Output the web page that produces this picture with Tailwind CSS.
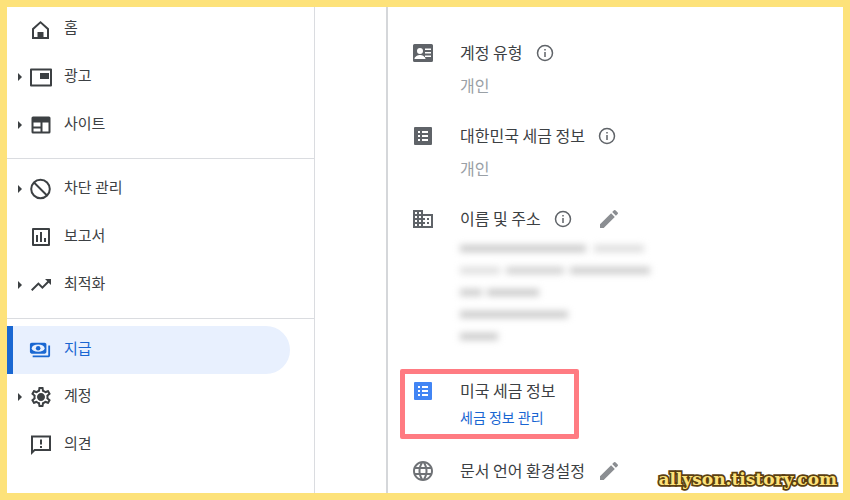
<!DOCTYPE html>
<html><head><meta charset="utf-8">
<script src="https://cdn.jsdelivr.net/npm/@tailwindcss/browser@4"></script>
</head>
<body class="m-0 bg-white">
<div class="w-[850px] h-[500px] overflow-hidden border-[7px] border-[#fde27a] bg-white flex font-['Noto_Sans_CJK_KR','Noto_Sans',sans-serif] text-[15px] text-[#3c4043] relative">
  <!-- sidebar -->
  <nav class="w-[308px] shrink-0 border-r border-[#dadce0] -mt-[2px] flex flex-col">
    <div class="flex items-center h-12 relative pl-[22px] gap-[11px]">
      <svg class="w-6 h-6 fill-[#3c4043]" viewBox="0 0 24 24"><path fill-rule="evenodd" d="M11.500 4 3 11.500V22h17V11.500zM18 20h-3.500v-5h-6v5H5v-7.600l6.500-5.800 6.500 5.800z"/></svg><span class="-mt-[3px]">홈</span>
    </div>
    <div class="flex items-center h-12 relative pl-[22px] gap-[11px]">
      <span class="absolute left-[11px] top-[20px] border-y-4 border-l-4 border-y-transparent border-l-[#3c4043]"></span>
      <svg class="w-6 h-6 fill-[#3c4043]" viewBox="0 0 24 24"><path fill-rule="evenodd" d="M2 3.500h20a1 1 0 0 1 1 1v16a1 1 0 0 1-1 1H2a1 1 0 0 1-1-1v-16a1 1 0 0 1 1-1zM3 5.500v14h18v-14zM11 8h9v6h-9z"/></svg><span class="-mt-[3px]">광고</span>
    </div>
    <div class="flex items-center h-12 relative pl-[22px] gap-[11px]">
      <span class="absolute left-[11px] top-[20px] border-y-4 border-l-4 border-y-transparent border-l-[#3c4043]"></span>
      <svg class="w-6 h-6 fill-[#3c4043]" viewBox="0 0 24 24"><path fill-rule="evenodd" d="M4 3.500h16a1.500 1.500 0 0 1 1.500 1.500v14a1.500 1.500 0 0 1-1.500 1.500H4A1.500 1.500 0 0 1 2.500 19V5A1.500 1.500 0 0 1 4 3.500zM4.500 9.500v4h7v-4zm9 0v9h6v-9zm-9 6v3h7v-3z"/></svg><span class="-mt-[3px]">사이트</span>
    </div>
    <div class="h-px bg-[#dadce0] mt-[9px] mb-[6px]"></div>
    <div class="flex items-center h-12 relative pl-[22px] gap-[11px]">
      <span class="absolute left-[11px] top-[20px] border-y-4 border-l-4 border-y-transparent border-l-[#3c4043]"></span>
      <svg class="w-6 h-6 fill-none stroke-[#3c4043] stroke-2" viewBox="0 0 24 24"><circle cx="11.500" cy="12" r="9.300"/><path d="M5 5.500l13 13"/></svg><span class="-mt-[3px]">차단 관리</span>
    </div>
    <div class="flex items-center h-12 relative pl-[22px] gap-[11px]">
      <svg class="w-6 h-6 fill-[#3c4043]" viewBox="0 0 24 24"><path fill-rule="evenodd" d="M4 3h16a1 1 0 0 1 1 1v16a1 1 0 0 1-1 1H4a1 1 0 0 1-1-1V4a1 1 0 0 1 1-1zm1 2v14h14V5zM7 10h2v7H7zm4-3h2v10h-2zm4 6h2v4h-2z"/></svg><span class="-mt-[3px]">보고서</span>
    </div>
    <div class="flex items-center h-12 relative pl-[22px] gap-[11px]">
      <span class="absolute left-[11px] top-[20px] border-y-4 border-l-4 border-y-transparent border-l-[#3c4043]"></span>
      <svg class="w-6 h-6 fill-[#3c4043]" viewBox="0 0 24 24"><path d="M16 6l2.290 2.290-4.880 4.880-4-4L2 16.590 3.410 18l6-6 4 4 6.300-6.290L22 12V6z"/></svg><span class="-mt-[3px]">최적화</span>
    </div>
    <div class="h-px bg-[#dadce0] mt-[9px] mb-[7px]"></div>
    <div class="flex items-center h-12 relative pl-[16px] gap-[13px] w-[283px] bg-[#e8f0fe] rounded-r-3xl text-[#1a66d2] border-l-[6px] border-[#1967d2]">
      <svg class="w-[22px] h-[22px] fill-[#1967d2]" viewBox="0 0 24 24"><path d="M19 14V6c0-1.100-.9-2-2-2H3c-1.100 0-2 .9-2 2v8c0 1.100.9 2 2 2h14c1.100 0 2-.9 2-2zM23 7v11c0 1.100-.9 2-2 2H4v-2h17V7h2z"/><ellipse cx="10" cy="10" rx="7" ry="4" fill="#e8f0fe"/><circle cx="10" cy="10" r="2.500"/></svg><span class="-mt-[3px]">지급</span>
    </div>
    <div class="flex items-center h-12 relative pl-[22px] gap-[11px] -mt-px">
      <span class="absolute left-[11px] top-[20px] border-y-4 border-l-4 border-y-transparent border-l-[#3c4043]"></span>
      <svg class="w-6 h-6 fill-[#3c4043]" viewBox="0 0 24 24"><path d="M19.430 12.980c.04-.32.07-.64.07-.98 0-.34-.03-.66-.07-.98l2.110-1.650c.19-.15.24-.42.12-.64l-2-3.460c-.09-.16-.26-.25-.44-.25-.06 0-.12.01-.17.03l-2.490 1c-.52-.4-1.080-.73-1.690-.98l-.38-2.650C14.460 2.180 14.250 2 14 2h-4c-.25 0-.46.18-.49.42l-.38 2.650c-.61.25-1.170.59-1.690.98l-2.490-1c-.06-.02-.12-.03-.18-.03-.17 0-.34.09-.43.25l-2 3.460c-.13.22-.07.49.12.64l2.110 1.650c-.04.32-.07.65-.07.98 0 .33.03.66.07.98l-2.110 1.650c-.19.15-.24.42-.12.64l2 3.460c.09.16.26.25.44.25.06 0 .12-.01.17-.03l2.490-1c.52.4 1.080.73 1.690.98l.38 2.650c.03.24.24.42.49.42h4c.25 0 .46-.18.49-.42l.38-2.650c.61-.25 1.170-.59 1.690-.98l2.490 1c.06.02.12.03.18.03.17 0 .34-.09.43-.25l2-3.460c.12-.22.07-.49-.12-.64l-2.110-1.650zm-1.980-1.710c.04.31.05.52.05.73 0 .21-.02.43-.05.73l-.14 1.130.89.7 1.080.84-.7 1.210-1.270-.51-1.040-.42-.9.68c-.43.32-.84.56-1.250.73l-1.060.43-.16 1.130-.2 1.350h-1.400l-.19-1.350-.16-1.130-1.060-.43c-.43-.18-.83-.41-1.230-.71l-.91-.7-1.060.43-1.270.51-.7-1.210 1.080-.84.89-.7-.14-1.130c-.03-.31-.05-.54-.05-.74s.02-.43.05-.73l.14-1.130-.89-.7-1.080-.84.7-1.210 1.270.51 1.040.42.9-.68c.43-.32.84-.56 1.250-.73l1.060-.43.16-1.130.2-1.350h1.390l.19 1.350.16 1.130 1.060.43c.43.18.83.41 1.230.71l.91.7 1.060-.43 1.270-.51.7 1.210-1.070.85-.89.7.14 1.130zM12 8c-2.210 0-4 1.790-4 4s1.790 4 4 4 4-1.790 4-4-1.790-4-4-4z"/></svg><span class="-mt-[3px]">계정</span>
    </div>
    <div class="flex items-center h-12 relative pl-[22px] gap-[11px]">
      <svg class="w-6 h-6 fill-[#3c4043]" viewBox="0 0 24 24"><path fill-rule="evenodd" d="M2 2.500h20V18H6l-4 4zM4 4.500v12.700L5.200 16H20V4.500zM11 6.500h2v5h-2zm0 6.500h2v2h-2z"/></svg><span class="-mt-[3px]">의견</span>
    </div>
  </nav>
  <!-- spacer column -->
  <div class="w-[71px] shrink-0"></div>
  <!-- content -->
  <main class="flex-1 border-l-2 border-[#d5d7da] pl-[23px] pt-[34px] relative text-[16px]">
    <section class="flex gap-[25px] h-[83px]">
      <svg class="w-6 h-6 fill-[#5f6368] shrink-0" viewBox="0 0 24 24"><path fill-rule="evenodd" d="M3.500 3h17a1.500 1.500 0 0 1 1.500 1.500v15a1.500 1.500 0 0 1-1.500 1.500h-17A1.500 1.500 0 0 1 2 19.500v-15A1.500 1.500 0 0 1 3.500 3zM9 7a3 3 0 1 0 0 6 3 3 0 0 0 0-6zm5 .5V9h6V7.500zm0 3.500v1.500h6V11zm0 3.500V16h6v-1.500zM3.500 18h11c0-2.500-3.500-4-5.500-4s-5.500 1.500-5.500 4z"/></svg>
      <div>
        <div class="flex items-center gap-[14px] h-6"><span class="-mt-[3px]">계정 유형</span><svg class="w-[18px] h-[18px] fill-none stroke-[#5f6368] stroke-[1.500]" viewBox="0 0 18 18"><circle cx="9" cy="9" r="7.500"/><path d="M9 8v5M9 5v1.600"/></svg></div>
        <div class="mt-[8px] text-[#9aa0a6]">개인</div>
      </div>
    </section>
    <section class="flex gap-[25px] h-[83px]">
      <svg class="w-6 h-6 fill-[#5f6368] shrink-0" viewBox="0 0 24 24"><path fill-rule="evenodd" d="M4 3h16a1 1 0 0 1 1 1v16a1 1 0 0 1-1 1H4a1 1 0 0 1-1-1V4a1 1 0 0 1 1-1zm3 4v2h2V7zm4 0v2h6V7zm-4 4v2h2v-2zm4 0v2h6v-2zm-4 4v2h2v-2zm4 0v2h6v-2z"/></svg>
      <div>
        <div class="flex items-center gap-[13px] h-6"><span class="-mt-[3px]">대한민국 세금 정보</span><svg class="w-[18px] h-[18px] fill-none stroke-[#5f6368] stroke-[1.500]" viewBox="0 0 18 18"><circle cx="9" cy="9" r="7.500"/><path d="M9 8v5M9 5v1.600"/></svg></div>
        <div class="mt-[8px] text-[#9aa0a6]">개인</div>
      </div>
    </section>
    <section class="flex gap-[25px] h-[173px]">
      <svg class="w-6 h-6 fill-[#5f6368] shrink-0" viewBox="0 0 24 24"><path d="M12 7V3H2v18h20V7H12zM6 19H4v-2h2v2zm0-4H4v-2h2v2zm0-4H4V9h2v2zm0-4H4V5h2v2zm4 12H8v-2h2v2zm0-4H8v-2h2v2zm0-4H8V9h2v2zm0-4H8V5h2v2zm10 12h-8v-2h2v-2h-2v-2h2v-2h-2V9h8v10zm-2-8h-2v2h2v-2zm0 4h-2v2h2v-2z"/></svg>
      <div class="flex-1">
        <div class="flex items-center h-6"><span class="-mt-[3px]">이름 및 주소</span><svg class="ml-[13px] w-[18px] h-[18px] fill-none stroke-[#5f6368] stroke-[1.500]" viewBox="0 0 18 18"><circle cx="9" cy="9" r="7.500"/><path d="M9 8v5M9 5v1.600"/></svg><svg class="ml-[25px] w-6 h-6 fill-[#8b8e92]" viewBox="0 0 24 24"><path d="M3 17.300V21h3.700L17.800 9.900l-3.700-3.700zM20.700 7a1 1 0 0 0 0-1.400l-2.300-2.300a1 1 0 0 0-1.400 0l-1.800 1.800 3.700 3.700z"/></svg></div>
        <div class="flex flex-col gap-[15px] mt-[14px] blur-[3.500px]">
          <div class="flex gap-[8px] h-[7px]"><div class="w-[126px] bg-[#c9c9c9]"></div><div class="w-[50px] bg-[#dcdcdc]"></div></div>
          <div class="flex gap-[6px] h-[7px]"><div class="w-[40px] bg-[#dedede]"></div><div class="w-[58px] bg-[#d0d0d0]"></div><div class="w-[80px] bg-[#cccccc]"></div></div>
          <div class="flex gap-[5px] h-[7px]"><div class="w-[22px] bg-[#cccccc]"></div><div class="w-[52px] bg-[#c9c9c9]"></div></div>
          <div class="h-[7px] w-[108px] bg-[#c9c9c9]"></div>
          <div class="h-[7px] w-[38px] bg-[#c9c9c9]"></div>
        </div>
      </div>
    </section>
    <section class="absolute left-[12px] top-[362px] w-[179px] h-[70px] border-[5px] border-[#ff7b82] rounded-[2px] pl-[6px] pt-[5px] flex gap-[25px]">
      <svg class="w-6 h-6 fill-[#4285f4] shrink-0" viewBox="0 0 24 24"><path fill-rule="evenodd" d="M4 3h16a1 1 0 0 1 1 1v16a1 1 0 0 1-1 1H4a1 1 0 0 1-1-1V4a1 1 0 0 1 1-1zm3 4v2h2V7zm4 0v2h6V7zm-4 4v2h2v-2zm4 0v2h6v-2zm-4 4v2h2v-2zm4 0v2h6v-2z"/></svg>
      <div>
        <div class="h-6 leading-6 whitespace-nowrap -mt-[1px]">미국 세금 정보</div>
        <div class="mt-[5px] text-[#1a66d2] text-[14px] leading-5 whitespace-nowrap">세금 정보 관리</div>
      </div>
    </section>
    <section class="absolute left-[23px] top-[452px] flex gap-[25px]">
      <svg class="w-6 h-6 fill-[#6f7276]" viewBox="0 0 24 24"><path d="M11.990 2C6.470 2 2 6.480 2 12s4.470 10 9.990 10C17.520 22 22 17.520 22 12S17.520 2 11.990 2zm6.930 6h-2.950c-.32-1.250-.78-2.450-1.380-3.560 1.840.63 3.370 1.910 4.330 3.560zM12 4.040c.83 1.200 1.480 2.530 1.910 3.960h-3.820c.43-1.430 1.080-2.760 1.910-3.960zM4.260 14C4.100 13.360 4 12.690 4 12s.1-1.360.26-2h3.380c-.08.66-.14 1.320-.14 2 0 .68.06 1.340.14 2H4.260zm.82 2h2.950c.32 1.250.78 2.450 1.380 3.560-1.840-.63-3.370-1.900-4.330-3.560zm2.950-8H5.080c.96-1.660 2.490-2.930 4.330-3.560C8.810 5.550 8.350 6.750 8.030 8zM12 19.960c-.83-1.200-1.480-2.530-1.910-3.960h3.820c-.43 1.430-1.080 2.760-1.910 3.960zM14.340 14H9.660c-.09-.66-.16-1.320-.16-2 0-.68.07-1.350.16-2h4.680c.09.65.16 1.320.16 2 0 .68-.07 1.340-.16 2zm.25 5.560c.6-1.110 1.060-2.310 1.380-3.560h2.950c-.96 1.650-2.490 2.930-4.330 3.560zM16.360 14c.08-.66.14-1.320.14-2 0-.68-.06-1.340-.14-2h3.380c.16.64.26 1.310.26 2s-.1 1.360-.26 2h-3.380z"/></svg>
      <div class="flex items-center h-6 whitespace-nowrap"><span class="-mt-[3px]">문서 언어 환경설정</span><svg class="ml-[12px] w-6 h-6 fill-[#8b8e92]" viewBox="0 0 24 24"><path d="M3 17.300V21h3.700L17.800 9.900l-3.700-3.700zM20.700 7a1 1 0 0 0 0-1.400l-2.300-2.300a1 1 0 0 0-1.400 0l-1.800 1.800 3.700 3.700z"/></svg></div>
    </section>
    <div class="absolute right-[6px] bottom-[1px] font-['DejaVu_Serif',serif] font-bold text-[17px] text-[#fde27a] [-webkit-text-stroke:3.500px_#5b3f10] [paint-order:stroke_fill]">allyson.tistory.com</div>
  </main>
</div>
</body></html>
